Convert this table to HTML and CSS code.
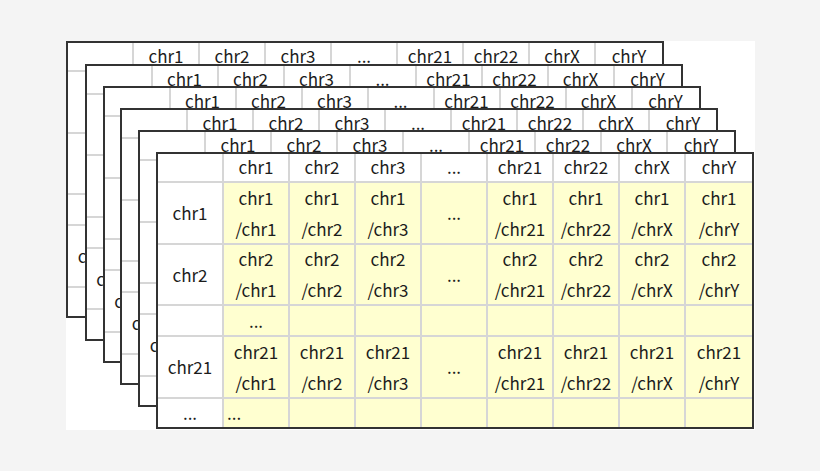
FILE: index.html
```html
<!DOCTYPE html>
<html>
<head>
<meta charset="utf-8">
<link rel="stylesheet" href="styles.css">
</head>
<body>
<div class="canvas">
  <div class="sheet s1">
    <div class="c"></div><div class="c">chr1</div><div class="c">chr2</div><div class="c">chr3</div><div class="c">...</div><div class="c">chr21</div><div class="c">chr22</div><div class="c">chrX</div><div class="c">chrY</div>
    <div class="c"></div><div class="c y"></div><div class="c y"></div><div class="c y"></div><div class="c y"></div><div class="c y"></div><div class="c y"></div><div class="c y"></div><div class="c y"></div>
    <div class="c"></div><div class="c y"></div><div class="c y"></div><div class="c y"></div><div class="c y"></div><div class="c y"></div><div class="c y"></div><div class="c y"></div><div class="c y"></div>
    <div class="c"></div><div class="c y"></div><div class="c y"></div><div class="c y"></div><div class="c y"></div><div class="c y"></div><div class="c y"></div><div class="c y"></div><div class="c y"></div>
    <div class="c">chr21</div><div class="c y"></div><div class="c y"></div><div class="c y"></div><div class="c y"></div><div class="c y"></div><div class="c y"></div><div class="c y"></div><div class="c y"></div>
    <div class="c"></div><div class="c y"></div><div class="c y"></div><div class="c y"></div><div class="c y"></div><div class="c y"></div><div class="c y"></div><div class="c y"></div><div class="c y"></div>
  </div>
  <div class="sheet s2">
    <div class="c"></div><div class="c">chr1</div><div class="c">chr2</div><div class="c">chr3</div><div class="c">...</div><div class="c">chr21</div><div class="c">chr22</div><div class="c">chrX</div><div class="c">chrY</div>
    <div class="c"></div><div class="c y"></div><div class="c y"></div><div class="c y"></div><div class="c y"></div><div class="c y"></div><div class="c y"></div><div class="c y"></div><div class="c y"></div>
    <div class="c"></div><div class="c y"></div><div class="c y"></div><div class="c y"></div><div class="c y"></div><div class="c y"></div><div class="c y"></div><div class="c y"></div><div class="c y"></div>
    <div class="c"></div><div class="c y"></div><div class="c y"></div><div class="c y"></div><div class="c y"></div><div class="c y"></div><div class="c y"></div><div class="c y"></div><div class="c y"></div>
    <div class="c">chr21</div><div class="c y"></div><div class="c y"></div><div class="c y"></div><div class="c y"></div><div class="c y"></div><div class="c y"></div><div class="c y"></div><div class="c y"></div>
    <div class="c"></div><div class="c y"></div><div class="c y"></div><div class="c y"></div><div class="c y"></div><div class="c y"></div><div class="c y"></div><div class="c y"></div><div class="c y"></div>
  </div>
  <div class="sheet s3">
    <div class="c"></div><div class="c">chr1</div><div class="c">chr2</div><div class="c">chr3</div><div class="c">...</div><div class="c">chr21</div><div class="c">chr22</div><div class="c">chrX</div><div class="c">chrY</div>
    <div class="c"></div><div class="c y"></div><div class="c y"></div><div class="c y"></div><div class="c y"></div><div class="c y"></div><div class="c y"></div><div class="c y"></div><div class="c y"></div>
    <div class="c"></div><div class="c y"></div><div class="c y"></div><div class="c y"></div><div class="c y"></div><div class="c y"></div><div class="c y"></div><div class="c y"></div><div class="c y"></div>
    <div class="c"></div><div class="c y"></div><div class="c y"></div><div class="c y"></div><div class="c y"></div><div class="c y"></div><div class="c y"></div><div class="c y"></div><div class="c y"></div>
    <div class="c">chr21</div><div class="c y"></div><div class="c y"></div><div class="c y"></div><div class="c y"></div><div class="c y"></div><div class="c y"></div><div class="c y"></div><div class="c y"></div>
    <div class="c"></div><div class="c y"></div><div class="c y"></div><div class="c y"></div><div class="c y"></div><div class="c y"></div><div class="c y"></div><div class="c y"></div><div class="c y"></div>
  </div>
  <div class="sheet s4">
    <div class="c"></div><div class="c">chr1</div><div class="c">chr2</div><div class="c">chr3</div><div class="c">...</div><div class="c">chr21</div><div class="c">chr22</div><div class="c">chrX</div><div class="c">chrY</div>
    <div class="c"></div><div class="c y"></div><div class="c y"></div><div class="c y"></div><div class="c y"></div><div class="c y"></div><div class="c y"></div><div class="c y"></div><div class="c y"></div>
    <div class="c"></div><div class="c y"></div><div class="c y"></div><div class="c y"></div><div class="c y"></div><div class="c y"></div><div class="c y"></div><div class="c y"></div><div class="c y"></div>
    <div class="c"></div><div class="c y"></div><div class="c y"></div><div class="c y"></div><div class="c y"></div><div class="c y"></div><div class="c y"></div><div class="c y"></div><div class="c y"></div>
    <div class="c">chr21</div><div class="c y"></div><div class="c y"></div><div class="c y"></div><div class="c y"></div><div class="c y"></div><div class="c y"></div><div class="c y"></div><div class="c y"></div>
    <div class="c"></div><div class="c y"></div><div class="c y"></div><div class="c y"></div><div class="c y"></div><div class="c y"></div><div class="c y"></div><div class="c y"></div><div class="c y"></div>
  </div>
  <div class="sheet s5">
    <div class="c"></div><div class="c">chr1</div><div class="c">chr2</div><div class="c">chr3</div><div class="c">...</div><div class="c">chr21</div><div class="c">chr22</div><div class="c">chrX</div><div class="c">chrY</div>
    <div class="c"></div><div class="c y"></div><div class="c y"></div><div class="c y"></div><div class="c y"></div><div class="c y"></div><div class="c y"></div><div class="c y"></div><div class="c y"></div>
    <div class="c"></div><div class="c y"></div><div class="c y"></div><div class="c y"></div><div class="c y"></div><div class="c y"></div><div class="c y"></div><div class="c y"></div><div class="c y"></div>
    <div class="c"></div><div class="c y"></div><div class="c y"></div><div class="c y"></div><div class="c y"></div><div class="c y"></div><div class="c y"></div><div class="c y"></div><div class="c y"></div>
    <div class="c">chr21</div><div class="c y"></div><div class="c y"></div><div class="c y"></div><div class="c y"></div><div class="c y"></div><div class="c y"></div><div class="c y"></div><div class="c y"></div>
    <div class="c"></div><div class="c y"></div><div class="c y"></div><div class="c y"></div><div class="c y"></div><div class="c y"></div><div class="c y"></div><div class="c y"></div><div class="c y"></div>
  </div>
  <div class="sheet s6">
    <div class="c"></div><div class="c">chr1</div><div class="c">chr2</div><div class="c">chr3</div><div class="c">...</div><div class="c">chr21</div><div class="c">chr22</div><div class="c">chrX</div><div class="c">chrY</div>
    <div class="c">chr1</div><div class="c y">chr1<br>/chr1</div><div class="c y">chr1<br>/chr2</div><div class="c y">chr1<br>/chr3</div><div class="c y">...</div><div class="c y">chr1<br>/chr21</div><div class="c y">chr1<br>/chr22</div><div class="c y">chr1<br>/chrX</div><div class="c y">chr1<br>/chrY</div>
    <div class="c">chr2</div><div class="c y">chr2<br>/chr1</div><div class="c y">chr2<br>/chr2</div><div class="c y">chr2<br>/chr3</div><div class="c y">...</div><div class="c y">chr2<br>/chr21</div><div class="c y">chr2<br>/chr22</div><div class="c y">chr2<br>/chrX</div><div class="c y">chr2<br>/chrY</div>
    <div class="c"></div><div class="c y">...</div><div class="c y"></div><div class="c y"></div><div class="c y"></div><div class="c y"></div><div class="c y"></div><div class="c y"></div><div class="c y"></div>
    <div class="c">chr21</div><div class="c y">chr21<br>/chr1</div><div class="c y">chr21<br>/chr2</div><div class="c y">chr21<br>/chr3</div><div class="c y">...</div><div class="c y">chr21<br>/chr21</div><div class="c y">chr21<br>/chr22</div><div class="c y">chr21<br>/chrX</div><div class="c y">chr21<br>/chrY</div>
    <div class="c">...</div><div class="c y start">...</div><div class="c y"></div><div class="c y"></div><div class="c y"></div><div class="c y"></div><div class="c y"></div><div class="c y"></div><div class="c y"></div>
  </div>
</div>
</body>
</html>
```
FILE: styles.css
```css
html, body {
  margin: 0;
  padding: 0;
}
body {
  background: #f4f4f4;
  font-family: "Noto Sans CJK KR", "Noto Sans", sans-serif;
  color: #1c1c1c;
}
.canvas {
  margin: 41px 0 0 66px;
  width: 689px;
  height: 389px;
  background: #ffffff;
  display: grid;
}
.sheet {
  grid-area: 1 / 1;
  justify-self: start;
  align-self: start;
  width: 598px;
  height: 277px;
  box-sizing: border-box;
  border: 2px solid #333333;
  background: #ffffff;
  display: grid;
  grid-template-columns: repeat(9, 66px);
  grid-template-rows: 29px 61.5px 61.5px 31px 61.5px minmax(0, 1fr);
}
.s2 { margin: 22.5px 0 0 18.5px; }
.s3 { margin: 45px 0 0 36.5px; }
.s4 { margin: 67px 0 0 54px; }
.s5 { margin: 89px 0 0 72px; }
.s6 { margin: 111px 0 0 90px; }
.c {
  box-sizing: border-box;
  min-height: 0;
  border-right: 2px solid #d6d6d6;
  border-bottom: 2px solid #d6d6d6;
  display: flex;
  align-items: center;
  justify-content: center;
  text-align: center;
  font-size: 17px;
  line-height: 31px;
  white-space: nowrap;
  overflow: visible;
}
.c:nth-child(-n+9) {
  padding-bottom: 2px;
}
.c:nth-child(9n) {
  border-right: 0;
}
.c:nth-child(n+46) {
  border-bottom: 0;
  line-height: 26px;
}
.y {
  background: #ffffd0;
}
.start {
  justify-content: flex-start;
  padding-left: 3px;
}
```
